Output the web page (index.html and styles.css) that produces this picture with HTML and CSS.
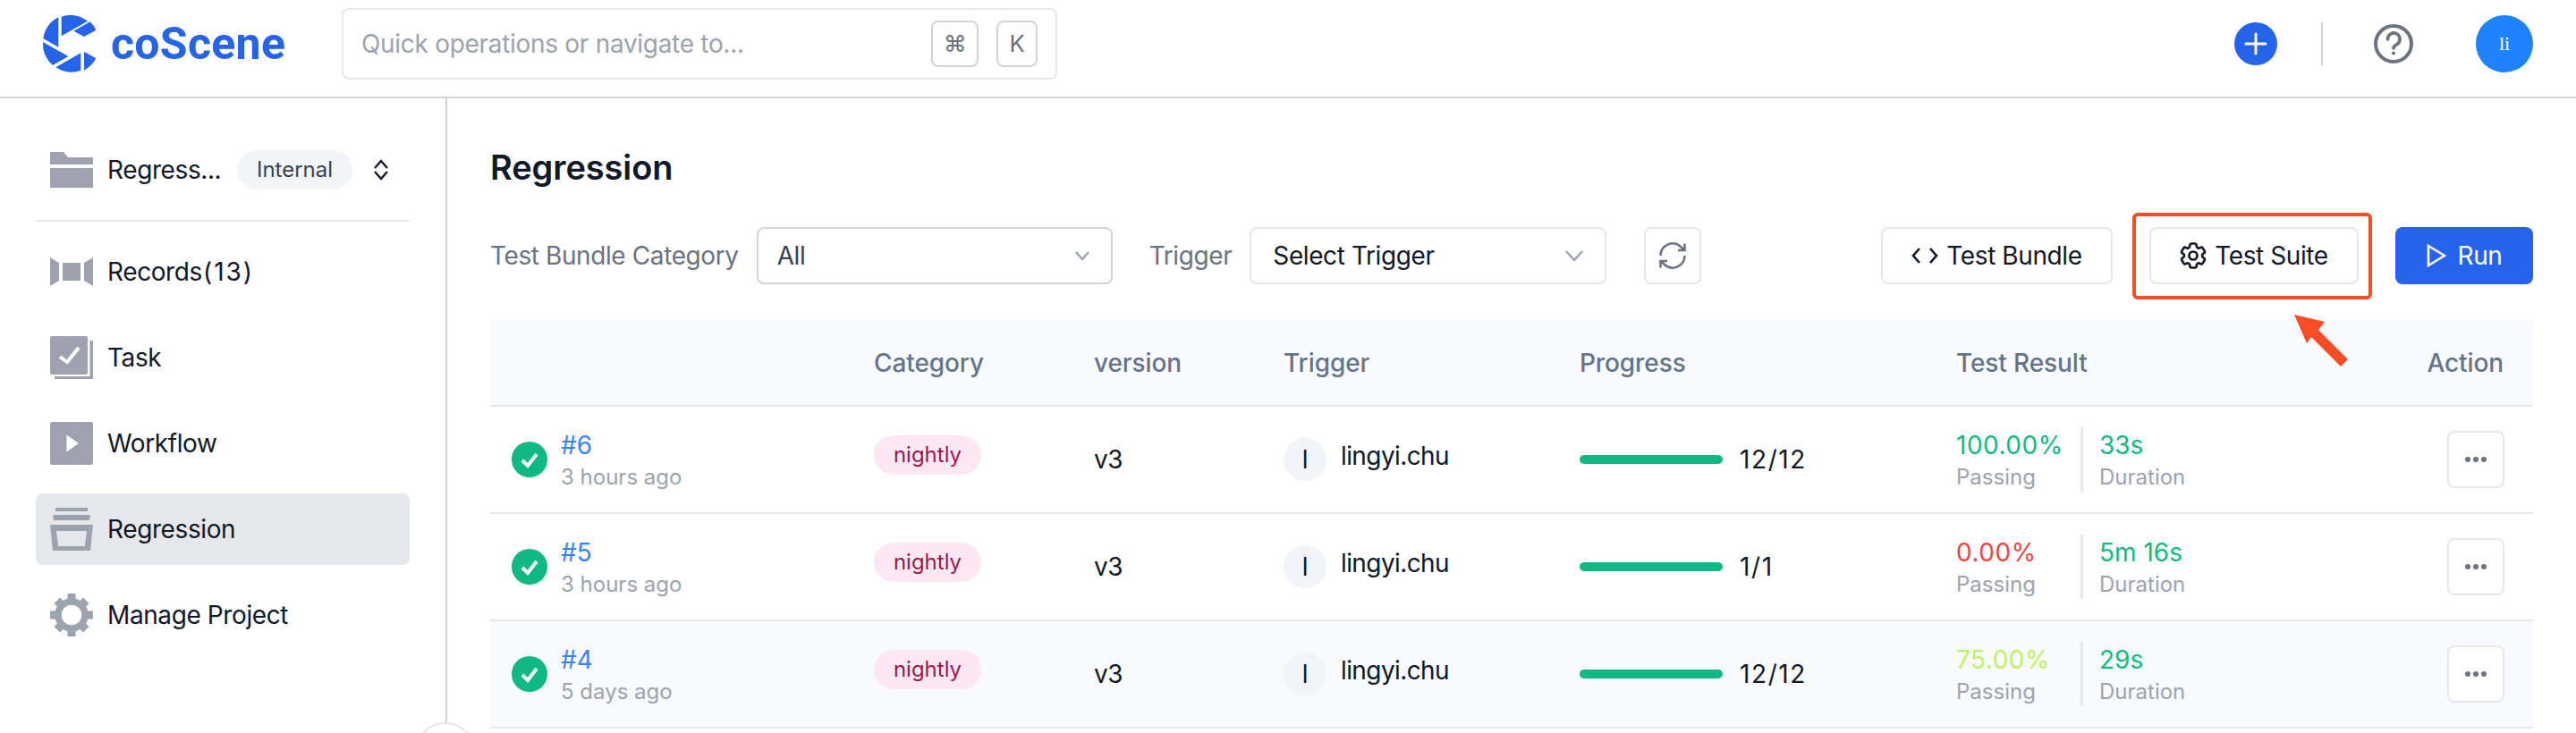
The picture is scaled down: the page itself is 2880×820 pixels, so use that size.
FILE: index.html
```html
<!DOCTYPE html>
<html lang="en">
<head>
<meta charset="utf-8">
<title>coScene Regression</title>
<link rel="stylesheet" href="styles.css">
</head>
<body>
<header class="topbar">
  <a class="logo">
    <svg class="logo-mark" viewBox="139 50 192 192"><path d="M207 55A96 96 0 0 1 295 70L207 120Z"/><path d="M197 57A96 96 0 0 0 146 128L197 157Z"/><path d="M248 103L303 72A96 96 0 0 1 323 100L283 122Z"/><path d="M145 140L230 188L178 218A96 96 0 0 1 145 140Z"/><path d="M188 225L272 177V235A96 96 0 0 1 188 225Z"/><path d="M283 172L323 195A96 96 0 0 1 283 235Z"/></svg>
    <span class="logo-text">coScene</span>
  </a>
  <div class="search">
    <span class="search-text">Quick operations or navigate to...</span>
    <kbd class="key key-cmd">⌘</kbd>
    <kbd class="key key-k">K</kbd>
  </div>
  <div class="top-actions">
    <span class="plus"><svg viewBox="0 0 48 48" class="fill-svg"><path d="M24 13V35M13 24H35" stroke="#fff" stroke-width="3" stroke-linecap="round"/></svg></span>
    <span class="top-sep"></span>
    <svg class="help" viewBox="0 0 44 44" fill="none" stroke="#6b7280" stroke-width="4"><circle cx="22" cy="22" r="20"/><path d="M15.500 17A6.800 6.800 0 1 1 26 22.500C23.500 24 22 24.500 22 27" stroke-width="3.600" stroke-linecap="round"/><circle cx="22" cy="32.500" r="2" fill="#6b7280" stroke="none"/></svg>
    <span class="user">li</span>
  </div>
</header>
<div class="shell">
  <aside class="sidebar">
    <div class="project">
      <svg class="nav-icon" width="48" height="40" viewBox="0 0 48 40"><path d="M0 0H15L20 6H48V14H0ZM0 18H48V40H0Z"/></svg>
      <span class="project-name">Regress...</span>
      <span class="chip">Internal</span>
      <svg class="updown" width="16" height="24" viewBox="0 0 16 24" fill="none" stroke="#111827" stroke-width="2.400"><path d="M1 10L8 2L15 10M1 14L8 22L15 14"/></svg>
    </div>
    <nav class="nav">
      <a class="nav-item">
        <svg class="nav-icon" width="48" height="32" viewBox="0 0 48 32"><path d="M0 0L10 6V26L0 32ZM14 6H34V26H14ZM38 6L48 0V32L38 26Z"/></svg>
        <span>Records<span class="nav-count">(13)</span></span>
      </a>
      <a class="nav-item">
        <svg class="nav-icon" width="48" height="48" viewBox="0 0 48 48"><rect width="42" height="43" rx="2"/><path d="M5 48V45H44.500V5H48V48Z"/><path d="M11 23L19 29L32 13" fill="none" stroke="#fff" stroke-width="4"/></svg>
        <span>Task</span>
      </a>
      <a class="nav-item">
        <svg class="nav-icon" width="48" height="48" viewBox="0 0 48 48"><rect width="48" height="48" rx="2"/><path d="M18.500 14.500L32 24L18.500 33.500Z" fill="#fff"/></svg>
        <span>Workflow</span>
      </a>
      <a class="nav-item active">
        <svg class="nav-icon" width="48" height="48" viewBox="0 0 48 48" fill-rule="evenodd"><path d="M6 0H42V4H6ZM3 8H45L44 14H4ZM0 19H48L45 48H3ZM7 26L9 43H39L41 26Z"/></svg>
        <span>Regression</span>
      </a>
      <a class="nav-item">
        <svg class="nav-icon" width="48" height="48" viewBox="0 0 48 48"><circle cx="24" cy="24" r="15" fill="none" stroke="#9ca3af" stroke-width="7.500"/><path d="M19.500 0H28.500V9H19.500ZM19.500 39H28.500V48H19.500ZM0 19.500H9V28.500H0ZM39 19.500H48V28.500H39Z"/><path d="M4.500 11L11 4.500L17 10.500L10.500 17ZM37 4.500L43.500 11L37.500 17L31 10.500ZM10.500 31L17 37.500L11 43.500L4.500 37ZM37.500 31L43.500 37L37 43.500L31 37.500Z"/></svg>
        <span>Manage Project</span>
      </a>
    </nav>
    <span class="collapse"></span>
  </aside>
  <main class="main">
    <h1 class="title">Regression</h1>
    <div class="toolbar">
      <label class="field-label">Test Bundle Category</label>
      <div class="select select-cat">
        <span class="select-value">All</span>
        <svg width="16" height="10" viewBox="0 0 16 10" fill="none" stroke="#9ca3af" stroke-width="2.400"><path d="M1 1L8 9L15 1"/></svg>
      </div>
      <label class="field-label trigger-label">Trigger</label>
      <div class="select select-trigger">
        <span class="select-trigger-value">Select Trigger</span>
        <svg width="20" height="12" viewBox="0 0 20 12" fill="none" stroke="#9ca3af" stroke-width="2.400"><path d="M1 1L10 11L19 1"/></svg>
      </div>
      <button class="icon-btn"><svg width="30" height="30" viewBox="2 2 20 20" fill="none" stroke="#6b7280" stroke-width="1.700"><path d="M3 12a9 9 0 0 1 15-6.700L21 8M21 3v5h-5M21 12a9 9 0 0 1-15 6.700L3 16M8 16H3v5"/></svg></button>
      <div class="tool-actions">
        <button class="btn btn-bundle"><svg width="30" height="18" viewBox="0 0 30 18" fill="none" stroke="#111827" stroke-width="2.600"><path d="M9 1L2 9L9 17M21 1L28 9L21 17"/></svg>Test Bundle</button>
        <button class="btn btn-suite"><svg width="30" height="30" viewBox="2 2 20 20" fill="none" stroke="#111827" stroke-width="1.800"><path d="M9.594 3.94c.09-.542.56-.94 1.11-.94h2.593c.55 0 1.02.398 1.11.94l.213 1.281c.063.374.313.686.645.87.074.04.147.083.22.127.324.196.72.257 1.075.124l1.217-.456a1.125 1.125 0 011.37.49l1.296 2.247a1.125 1.125 0 01-.26 1.431l-1.003.827c-.293.24-.438.613-.431.992a6.759 6.759 0 010 .255c-.007.378.138.75.43.99l1.005.828c.424.35.534.954.26 1.43l-1.298 2.247a1.125 1.125 0 01-1.369.491l-1.217-.456c-.355-.133-.75-.072-1.076.124a6.57 6.57 0 01-.22.128c-.331.183-.581.495-.644.869l-.213 1.28c-.09.543-.56.941-1.11.941h-2.594c-.55 0-1.02-.398-1.11-.94l-.213-1.281c-.062-.374-.312-.686-.644-.87a6.52 6.52 0 01-.22-.127c-.325-.196-.72-.257-1.076-.124l-1.217.456a1.125 1.125 0 01-1.369-.49l-1.297-2.247a1.125 1.125 0 01.26-1.431l1.004-.827c.292-.24.437-.613.43-.992a6.932 6.932 0 010-.255c.007-.378-.138-.75-.43-.99l-1.004-.828a1.125 1.125 0 01-.26-1.43l1.297-2.247a1.125 1.125 0 011.37-.491l1.216.456c.356.133.751.072 1.076-.124.072-.044.146-.087.22-.128.332-.183.582-.495.644-.869l.214-1.281z"/><path d="M15 12a3 3 0 11-6 0 3 3 0 016 0z"/></svg>Test Suite</button>
        <button class="btn btn-run"><svg width="22" height="26" viewBox="0 0 22 26" fill="none" stroke="#fff" stroke-width="2.600"><path d="M2 2L20 13L2 24Z"/></svg>Run</button>
      </div>
    </div>
    <div class="table">
      <div class="row head">
        <span></span>
        <span>Category</span>
        <span>version</span>
        <span>Trigger</span>
        <span>Progress</span>
        <span>Test Result</span>
        <span class="head-action">Action</span>
      </div>

      <div class="row">
        <div class="run-cell">
          <svg class="ok" width="40" height="40" viewBox="0 0 40 40"><circle cx="20" cy="20" r="20" fill="#10b981"/><path d="M12 21L18 27L28 14" fill="none" stroke="#fff" stroke-width="4"/></svg>
          <div class="stack"><a class="run-id">#6</a><span class="sub">3 hours ago</span></div>
        </div>
        <div><span class="tag">nightly</span></div>
        <div class="version">v3</div>
        <div class="trigger"><span class="avatar">l</span><span class="trigger-name">lingyi.chu</span></div>
        <div class="progress"><span class="bar"></span><span class="count">12/12</span></div>
        <div class="result">
          <div class="stack stat"><span class="good pct">100.00%</span><span class="sub">Passing</span></div>
          <span class="result-sep"></span>
          <div class="stack"><span class="good">33s</span><span class="sub">Duration</span></div>
        </div>
        <div class="action"><button class="more"><svg width="26" height="8" viewBox="0 0 26 8" fill="#6b7280"><circle cx="4" cy="4" r="3"/><circle cx="13" cy="4" r="3"/><circle cx="22" cy="4" r="3"/></svg></button></div>
      </div>

      <div class="row">
        <div class="run-cell">
          <svg class="ok" width="40" height="40" viewBox="0 0 40 40"><circle cx="20" cy="20" r="20" fill="#10b981"/><path d="M12 21L18 27L28 14" fill="none" stroke="#fff" stroke-width="4"/></svg>
          <div class="stack"><a class="run-id">#5</a><span class="sub">3 hours ago</span></div>
        </div>
        <div><span class="tag">nightly</span></div>
        <div class="version">v3</div>
        <div class="trigger"><span class="avatar">l</span><span class="trigger-name">lingyi.chu</span></div>
        <div class="progress"><span class="bar"></span><span class="count">1/1</span></div>
        <div class="result">
          <div class="stack stat"><span class="bad pct">0.00%</span><span class="sub">Passing</span></div>
          <span class="result-sep"></span>
          <div class="stack"><span class="good">5m 16s</span><span class="sub">Duration</span></div>
        </div>
        <div class="action"><button class="more"><svg width="26" height="8" viewBox="0 0 26 8" fill="#6b7280"><circle cx="4" cy="4" r="3"/><circle cx="13" cy="4" r="3"/><circle cx="22" cy="4" r="3"/></svg></button></div>
      </div>

      <div class="row striped">
        <div class="run-cell">
          <svg class="ok" width="40" height="40" viewBox="0 0 40 40"><circle cx="20" cy="20" r="20" fill="#10b981"/><path d="M12 21L18 27L28 14" fill="none" stroke="#fff" stroke-width="4"/></svg>
          <div class="stack"><a class="run-id">#4</a><span class="sub">5 days ago</span></div>
        </div>
        <div><span class="tag">nightly</span></div>
        <div class="version">v3</div>
        <div class="trigger"><span class="avatar">l</span><span class="trigger-name">lingyi.chu</span></div>
        <div class="progress"><span class="bar"></span><span class="count">12/12</span></div>
        <div class="result">
          <div class="stack stat"><span class="warn pct">75.00%</span><span class="sub">Passing</span></div>
          <span class="result-sep"></span>
          <div class="stack"><span class="good">29s</span><span class="sub">Duration</span></div>
        </div>
        <div class="action"><button class="more"><svg width="26" height="8" viewBox="0 0 26 8" fill="#6b7280"><circle cx="4" cy="4" r="3"/><circle cx="13" cy="4" r="3"/><circle cx="22" cy="4" r="3"/></svg></button></div>
      </div>
    </div>
    <span class="mark-box"></span>
    <svg class="mark-arrow" width="70" height="60" viewBox="0 0 70 60"><path d="M5 2L39 10L32 19L65 52L57 60L24 27L19 34Z" fill="#f54e27"/></svg>
  </main>
</div>
</body>
</html>
```

FILE: styles.css
```css
* { box-sizing: border-box; }
html, body { margin: 0; height: 820px; overflow: hidden; background: #fff; }
body { font-family: Inter, "DejaVu Sans", sans-serif; font-size: 28px; line-height: 36px; color: #111827; letter-spacing: -0.4px; }
button { font: inherit; letter-spacing: inherit; color: inherit; background: #fff; margin: 0; padding: 0; cursor: pointer; }
svg { display: block; flex: none; }

.topbar { display: flex; align-items: center; height: 110px; border-bottom: 2px solid #d1d5db; padding: 0 48px 10px 46px; }
.logo { display: flex; align-items: center; width: 336px; flex: none; }
.logo-mark { width: 64px; height: 64px; fill: #2563eb; }
.logo-text { margin-left: 14px; font-family: Roboto, sans-serif; font-weight: 700; font-size: 50px; line-height: 60px; color: #2563eb; letter-spacing: 0.3px; }
.search { display: flex; align-items: center; width: 800px; height: 80px; border: 2px solid #e5e7eb; border-radius: 8px; padding: 0 20px; }
.search-text { color: #9ca3af; flex: 1; letter-spacing: -0.3px; }
.key { display: flex; align-items: center; justify-content: center; height: 52px; border: 2px solid #d1d5db; border-radius: 8px; color: #6b7280; font-family: Inter, "DejaVu Sans", sans-serif; font-size: 26px; }
.key-cmd { width: 53px; margin-right: 20px; }
.key-k { width: 46px; }
.top-actions { display: flex; align-items: center; margin-left: auto; }
.plus { display: block; width: 48px; height: 48px; border-radius: 50%; background: #2563eb; }
.fill-svg { width: 48px; height: 48px; }
.top-sep { width: 2px; height: 48px; background: #d1d5db; margin: 0 57px 0 49px; }
.help { width: 44px; height: 44px; }
.user { display: flex; align-items: center; justify-content: center; width: 64px; height: 64px; margin-left: 70px; border-radius: 50%; background: #1f82ff; color: #fff; font-family: "Liberation Serif", serif; font-size: 22px; letter-spacing: 0; }

.shell { display: flex; height: 710px; }
.sidebar { position: relative; width: 500px; flex: none; border-right: 2px solid #d1d5db; padding: 0 40px; }
.nav-icon { fill: #9ca3af; width: 48px; }
.project { display: flex; align-items: center; height: 138px; padding: 24px 0 0 16px; border-bottom: 2px solid #e5e7eb; }
.project-name { margin-left: 16px; width: 145px; flex: none; }
.chip { display: block; width: 129px; height: 44px; border-radius: 22px; background: #f3f4f6; color: #374151; font-size: 24px; line-height: 44px; text-align: center; flex: none; letter-spacing: 0; }
.updown { margin-left: 24px; }
.nav { display: flex; flex-direction: column; gap: 16px; padding-top: 16px; }
.nav-item { display: flex; align-items: center; gap: 16px; height: 80px; padding-left: 16px; border-radius: 8px; }
.nav-item.active { background: #e5e7eb; }
.nav-count { margin-left: 1px; letter-spacing: 2px; }
.collapse { position: absolute; right: -34px; top: 698px; width: 68px; height: 68px; border: 2px solid #e5e7eb; border-radius: 50%; background: #fff; }

.main { position: relative; flex: 1; padding: 0 48px; min-width: 0; }
.title { margin: 0; padding-top: 55px; font-size: 38px; line-height: 44px; font-weight: 600; color: #111827; letter-spacing: -0.1px; }
.toolbar { display: flex; align-items: center; height: 64px; margin-top: 45px; }
.field-label { color: #6b7280; flex: none; }
.trigger-label { margin-left: 41px; }
.select { display: flex; align-items: center; justify-content: space-between; height: 64px; margin-left: 20px; border-radius: 8px; flex: none; }
.select-cat { width: 398px; padding: 0 24px 0 21px; border: 2px solid #d1d5db; color: #374151; }
.select-trigger { width: 399px; padding: 0 24px; border: 2px solid #e5e7eb; }
.icon-btn { display: flex; align-items: center; justify-content: center; width: 64px; height: 64px; margin-left: 42px; border: 2px solid #e5e7eb; border-radius: 8px; flex: none; }
.tool-actions { display: flex; gap: 41px; margin-left: auto; }
.btn { display: flex; align-items: center; justify-content: center; height: 64px; border: 2px solid #e5e7eb; border-radius: 8px; gap: 9px; }
.btn-bundle { width: 259px; }
.btn-suite { width: 234px; }
.btn-run { width: 154px; border: none; gap: 13px; background: #2563eb; color: #fff; }

.table { margin-top: 40px; }
.row { display: grid; grid-template-columns: 429px 246px 212px 331px 421px 1fr 120px; align-items: center; height: 120px; border-bottom: 2px solid #e5e7eb; }
.row.head { height: 97px; background: #f9fafb; color: #64748b; font-weight: 500; padding-top: 1px; letter-spacing: -0.1px; }
.row.striped { background: #f9fafb; }
.head-action { text-align: right; padding-right: 33px; }
.run-cell { display: flex; align-items: center; gap: 15px; padding-left: 24px; }
.stack { display: flex; flex-direction: column; padding-top: 4px; letter-spacing: 0; }
.run-id { color: #3b82f6; }
.sub { color: #9ca3af; font-size: 24px; letter-spacing: 0; }
.tag { display: block; width: 120px; height: 44px; margin-bottom: 10px; border-radius: 22px; background: #fce7f3; color: #9d174d; font-size: 24px; line-height: 44px; text-align: center; letter-spacing: 0; }
.trigger { display: flex; align-items: center; gap: 16px; }
.avatar { display: flex; align-items: center; justify-content: center; width: 48px; height: 48px; border-radius: 50%; background: #f1f5f9; }
.trigger-name { margin-bottom: 8px; letter-spacing: -0.6px; }
.progress { display: flex; align-items: center; gap: 19px; }
.count { letter-spacing: 1.6px; }
.bar { display: block; width: 160px; height: 10px; border-radius: 5px; background: #10b981; }
.result { display: flex; align-items: center; }
.stat { width: 139px; }
.pct { letter-spacing: 0.5px; }
.result-sep { width: 3px; height: 72px; background: #e5e7eb; margin-right: 18px; flex: none; }
.good { color: #10b981; }
.bad { color: #ef4444; }
.warn { color: #bef264; }
.action { display: flex; justify-content: flex-end; padding-right: 32px; }
.more { display: flex; align-items: center; justify-content: center; width: 64px; height: 64px; border: 2px solid #e5e7eb; border-radius: 8px; }

.mark-box { position: absolute; left: 1884px; top: 128px; width: 268px; height: 97px; border: 4px solid #f54e27; border-radius: 6px; }
.mark-arrow { position: absolute; left: 2060px; top: 240px; }
```
